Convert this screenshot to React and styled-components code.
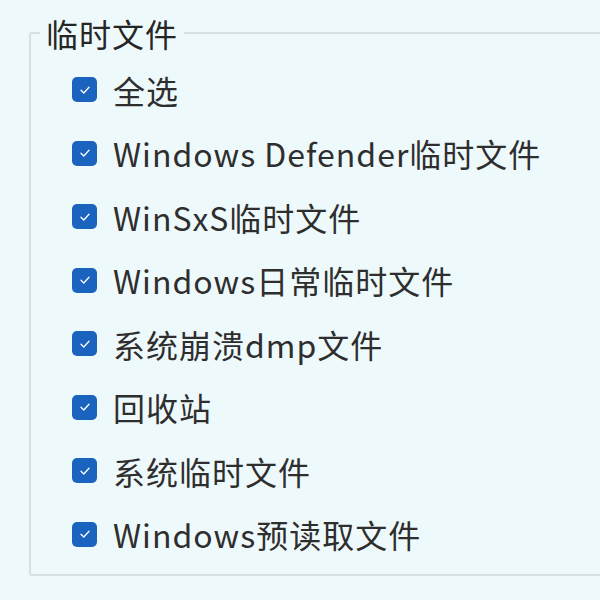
import React from "react";
import styled, { createGlobalStyle } from "styled-components";

const GlobalStyle = createGlobalStyle`
  html, body {
    margin: 0;
    padding: 0;
    background: #eef9fb;
  }
  body {
    font-family: "Noto Sans CJK SC", "Noto Sans", sans-serif;
    color: #2b2b2b;
  }
`;

const Page = styled.div`
  width: 600px;
  height: 600px;
  overflow: hidden;
  padding: 16px 0 0 29px;
  box-sizing: border-box;
`;

const Group = styled.fieldset`
  margin: 0;
  width: 620px;
  height: 560px;
  box-sizing: border-box;
  border: 2px solid #d6e1e2;
  border-right: none;
  border-radius: 3px;
  padding: 0 0 0 9px;
`;

const Legend = styled.legend`
  font-size: 32px;
  line-height: 34px;
  letter-spacing: 1px;
  padding: 0 6px;
  color: #262626;
`;

const List = styled.div`
  display: flex;
  flex-direction: column;
  gap: 22px;
  padding: 19px 0 0 32px;
`;

const Row = styled.label`
  display: flex;
  align-items: center;
  gap: 16px;
  height: 41.5px;
  font-size: 32px;
  letter-spacing: 1px;
  color: #2e2e2e;
`;

const Box = styled.span`
  width: 25px;
  height: 25px;
  border-radius: 5px;
  background: #1a63bf;
  display: flex;
  align-items: center;
  justify-content: center;
  flex-shrink: 0;
`;

const items = [
  "全选",
  "Windows Defender临时文件",
  "WinSxS临时文件",
  "Windows日常临时文件",
  "系统崩溃dmp文件",
  "回收站",
  "系统临时文件",
  "Windows预读取文件",
];

function Check() {
  return (
    <Box>
      <svg width="14" height="14" viewBox="0 0 14 14">
        <path d="M3 7.2 L5.8 10 L11 4.2" fill="none" stroke="#ffffff" strokeWidth="1.3" strokeLinecap="round" strokeLinejoin="round" />
      </svg>
    </Box>
  );
}

export default function App() {
  return (
    <>
      <GlobalStyle />
      <Page>
        <Group>
          <Legend>临时文件</Legend>
          <List>
            {items.map((t) => (
              <Row key={t}>
                <Check />
                {t}
              </Row>
            ))}
          </List>
        </Group>
      </Page>
    </>
  );
}
